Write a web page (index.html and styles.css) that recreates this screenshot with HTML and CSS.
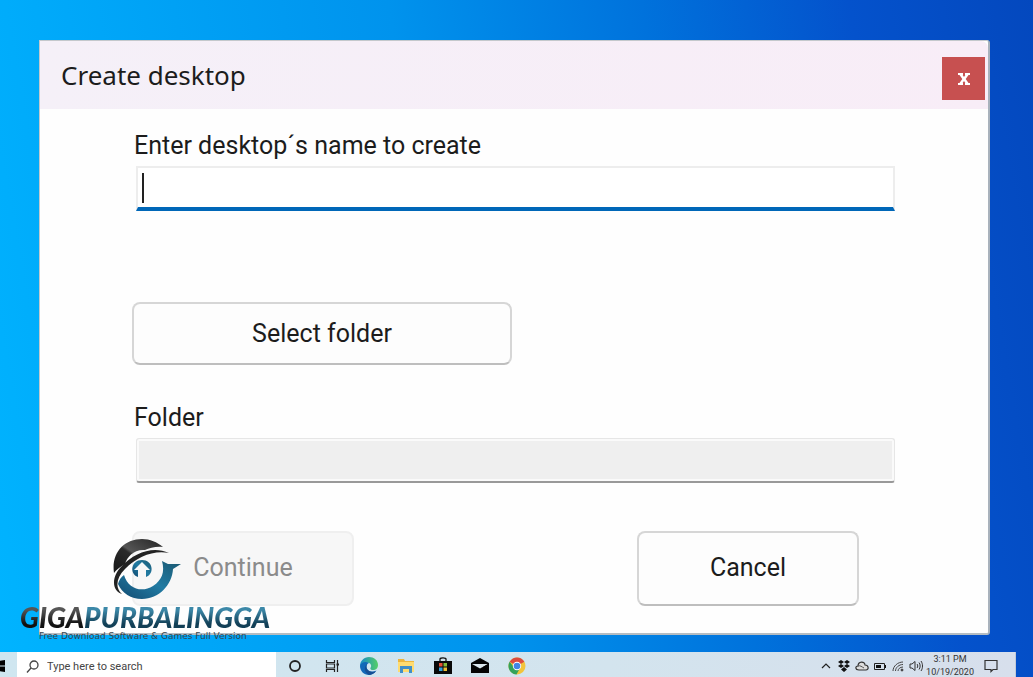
FILE: index.html
```html
<!DOCTYPE html>
<html lang="en">

  <head>
    <meta charset="utf-8">
    <title>Create desktop</title>
    <link rel="stylesheet" href="styles.css">
  </head>

  <body>

  <main class="desktop">
    <form class="dialog">
      <div class="header">
        <h1>Create desktop</h1>
        <button class="close" type="button" aria-label="Close">
          <svg width="12" height="12" viewBox="0 0 12 12"><path d="M0 0H5V2H4.600L6 4L7.400 2H7V0H12V2H10.500L7.700 6L10.500 10H12V12H7V10H7.400L6 8L4.600 10H5V12H0V10H1.500L4.300 6L1.500 2H0Z" fill="#fff"/></svg>
        </button>
      </div>

      <div class="content">
        <label for="name">Enter desktop´s name to create</label>
        <div class="field">
          <input class="name" id="name" type="text">
          <span class="caret"></span>
        </div>

        <button class="select" type="button">Select folder</button>

        <label for="folder">Folder</label>
        <div class="field">
          <input class="folder" id="folder" type="text" readonly>
        </div>

        <div class="buttons">
          <button class="continue" type="submit" disabled>Continue</button>
          <button class="cancel" type="button">Cancel</button>
        </div>
      </div>
    </form>

    <div class="watermark">
      <svg class="emblem" width="70" height="62" viewBox="0 0 70 62">
        <defs>
          <linearGradient id="dark" x1="0" y1="1" x2="1" y2="0">
            <stop offset="0" stop-color="#161616"/>
            <stop offset=".45" stop-color="#2b2b2b"/>
            <stop offset=".5" stop-color="#555"/>
            <stop offset="1" stop-color="#222"/>
          </linearGradient>
          <linearGradient id="teal" x1="0" y1="1" x2="1" y2="0">
            <stop offset="0" stop-color="#124a70"/>
            <stop offset=".5" stop-color="#217ba3"/>
            <stop offset="1" stop-color="#1b5870"/>
          </linearGradient>
        </defs>
        <path d="M2 35C-1 15 12 1 30 1C38 1 45 4 51 9C44 8 38 10 33 12C22 11 15 19 13 26C8 29 4 32 2 35Z" fill="url(#dark)"/>
        <path d="M10 56C-1 52 0 38 9 29C23 14 41 8 57 15C41 12 25 19 13 31C4 40 3 50 10 56Z" fill="#222"/>
        <path d="M12 37C16 51 30 55 41 48C50 42 53 34 50 23L56 26L69 26L61 31C60 47 47 61 30 61C19 61 10 55 6 46C7 42 9 39 12 37Z" fill="url(#teal)"/>
        <path d="M26 39C17 36 19 22 30 22C41 22 43 36 34 39V32H38L30 24L22 32H26Z" fill="url(#teal)"/>
      </svg>
      <div class="brand"><span class="giga">GIGA</span><span class="purba">PURBALINGGA</span></div>
      <div class="slogan">Free Download Software &amp; Games Full Version</div>
    </div>
  </main>

  <div class="taskbar">
    <button class="start" type="button" aria-label="Start">
      <svg width="5" height="12" viewBox="0 0 5 12"><path d="M0 0.700L5 0V5.500H0ZM0 6.500H5V12L0 11.300Z" fill="#000"/></svg>
    </button>
    <div class="search">
      <svg width="13" height="13" viewBox="0 0 13 13" fill="none" stroke="#444" stroke-width="1.300"><circle cx="8" cy="5" r="4"/><path d="M5 8L1 12.500"/></svg>
      <input type="text" aria-label="Search" placeholder="Type here to search">
    </div>

    <div class="apps">
      <svg width="20" height="20" viewBox="0 0 20 20"><circle cx="10" cy="10" r="5" fill="none" stroke="#222" stroke-width="1.800"/></svg>
      <svg width="20" height="20" viewBox="0 0 20 20" fill="none" stroke="#222"><path d="M4.500 4V6.500H12.500V4M4.500 16V13.500H12.500V16M4.500 8V12H12.500V8ZM15.500 4V16" stroke-width="1.200"/><path d="M14.500 8.500H17" stroke-width="2"/></svg>
      <svg width="20" height="20" viewBox="0 0 20 20">
        <defs>
          <linearGradient id="edgeTop" x1="0" y1="0" x2="1" y2="0"><stop offset="0" stop-color="#1688c8"/><stop offset="1" stop-color="#55cf68"/></linearGradient>
        </defs>
        <path d="M1 10C1 5 5 1 10 1C15 1 19 4 19 9C19 12 17 14 14 14C11 14 11 12 12 11C13 7 9 6 6 7C3 8 1 11 1 10Z" fill="url(#edgeTop)"/>
        <path d="M1 10C2 6 7 5 10 7C7 8 7 12 9 14C11 16 15 16 17.500 14.500C15 18 12 19 10 19C5 19 1 15 1 10Z" fill="#1268b8"/>
        <path d="M8 8C6 12 9 16 14 16C16 16 17 15 17.500 14.500C15 18 12 19 10 19C6 17 4 12 8 8Z" fill="#164f94"/>
      </svg>
      <svg width="20" height="20" viewBox="0 0 20 20"><path d="M2 3H8L9 5H18V16H2Z" fill="#edb63d"/><path d="M2 6H18V16H2Z" fill="#ffdc70"/><path d="M4 10H16V17H13V13H7V17H4Z" fill="#418fc7"/></svg>
      <svg width="20" height="20" viewBox="0 0 20 20"><path d="M7 6V3C7 1.500 13 1.500 13 3V6" fill="none" stroke="#111" stroke-width="1.300"/><path d="M1 5H19V18H1Z" fill="#090909"/><path d="M6 7H9.500V10.500H6Z" fill="#e75036"/><path d="M10.500 7H14V10.500H10.500Z" fill="#83bb38"/><path d="M6 11.500H9.500V15H6Z" fill="#31a0dc"/><path d="M10.500 11.500H14V15H10.500Z" fill="#efbd34"/></svg>
      <svg width="20" height="20" viewBox="0 0 20 20"><path d="M1 7L10 2L19 7V17H1Z" fill="#050505"/><path d="M2 8H18L10 12.500Z" fill="#dce8ee"/><path d="M13 11L18 14V8Z" fill="#050505"/></svg>
      <svg width="20" height="20" viewBox="0 0 20 20"><circle cx="10" cy="10" r="8.500" fill="#f2c43b"/><path d="M10 10L2.600 5.800C6 0 14 0 17.400 5.800Z" fill="#dc4b3e"/><path d="M10 10H6L2.600 5.800C-0.500 11 3 18 9.500 18.500L13 12Z" fill="#34a25a"/><circle cx="10" cy="10" r="4.200" fill="#fff"/><circle cx="10" cy="10" r="3.300" fill="#4285e4"/></svg>
    </div>

    <div class="tray">
      <svg width="14" height="14" viewBox="0 0 14 14"><path d="M3 9L7 5L11 9" fill="none" stroke="#222" stroke-width="1.200"/></svg>
      <svg width="14" height="14" viewBox="0 0 14 14" fill="#111"><path d="M4 1L7 3L4 5L1 3ZM10 1L13 3L10 5L7 3ZM4 5L7 7L4 9L1 7ZM10 5L13 7L10 9L7 7ZM7 8L10 10.500L7 13L4 10.500Z"/></svg>
      <svg width="14" height="14" viewBox="0 0 14 14"><path d="M4 11C0 11 0 7 3 7C3 2 10 2 10 6C14 6 14 11 11 11Z" fill="#ddd" stroke="#333" stroke-width="1.200"/><path d="M3 7C5 6 7 8 9 9" fill="none" stroke="#555"/></svg>
      <svg width="14" height="14" viewBox="0 0 14 14"><path d="M1.500 4.500H11.500V10.500H1.500Z" fill="none" stroke="#222"/><path d="M3 6H8V9H3ZM12 6H13V9H12Z" fill="#111"/></svg>
      <svg width="14" height="14" viewBox="0 0 14 14" fill="none" stroke="#444"><path d="M2 12C2 7 7 3 12 3M4.500 12C4.500 8.500 8 5.500 12 5.500M7 12C7 10 9 8 12 8"/><circle cx="11" cy="11" r="1" fill="#333"/></svg>
      <svg width="14" height="14" viewBox="0 0 14 14" fill="none" stroke="#333"><path d="M1 5H3L6 2.500V11.500L3 9H1ZM8 5C9 6 9 8 8 9M10 3.500C11.500 5 11.500 9 10 10.500M12 2C14 5 14 9 12 12"/></svg>
    </div>
    <div class="clock">3:11 PM<br>10/19/2020</div>
    <svg class="notes" width="14" height="14" viewBox="0 0 14 14"><path d="M1 1.500H13V10.500H9L7 12.500V10.500H1Z" fill="none" stroke="#333" stroke-width="1.200"/></svg>
  </div>

  </body>

</html>
```
FILE: styles.css
```css
* {
  box-sizing: border-box;
}

body {
  margin: 0;
  min-height: 100vh;
  display: flex;
  flex-direction: column;
  font-family: Roboto, "Liberation Sans", sans-serif;
  color: #1c1c1c;
  background: linear-gradient(80deg, #00b4ff 0%, #00a8f9 16%, #0093ed 44%, #0072dc 66%, #0452cc 84%, #0448be 100%);
}

h1 {
  margin: 0;
  font-family: "Noto Sans", sans-serif;
  font-size: 26px;
  line-height: 32px;
  font-weight: 400;
}

button, input {
  font-family: inherit;
  font-size: 25px;
  color: inherit;
}

.desktop {
  position: relative;
  flex: 1;
  display: flex;
  padding: 40px 43px 17px 39px;
}

.dialog {
  flex: 1;
  display: flex;
  flex-direction: column;
  background-color: #fefefe;
  border: 1px solid #c4c8cc;
  border-right: 2px solid #a9b2bc;
  border-bottom: 2px solid #b4bcc2;
  border-radius: 0 3px 3px 0;
}

.header {
  display: flex;
  align-items: center;
  justify-content: space-between;
  height: 68px;
  padding: 0 3px 0 21px;
  background: linear-gradient(to right, #f5f0f8, #f8edf7);
  border-radius: 0 7px 0 0;
}

.close {
  display: flex;
  align-items: center;
  justify-content: center;
  width: 43px;
  height: 43px;
  margin-top: 7px;
  padding: 0;
  border: 0;
  background-color: #c75050;
}

.content {
  display: flex;
  flex-direction: column;
  padding: 21px 93px 27px 92px;
}

label {
  padding-left: 2px;
  font-size: 25px;
  line-height: 32px;
}

.field {
  position: relative;
  display: flex;
  margin: 4px 0 0 4px;
}

.field input {
  flex: 1;
  min-width: 0;
  height: 45px;
  padding: 0 6px;
  outline: 0;
}

.name {
  background-color: #fff;
  border: 2px solid #ededed;
  border-bottom: 4px solid #0067b8;
}

.caret {
  position: absolute;
  left: 6px;
  top: 7px;
  width: 2px;
  height: 30px;
  background-color: #222;
}

.folder {
  background-color: #efefef;
  border: 1px solid #e6e6e6;
  border-bottom: 2px solid #999;
  border-radius: 3px;
  box-shadow: inset 0 0 0 2px #fafafa;
}

.select, .cancel, .continue {
  padding: 0;
  background-color: #fdfdfd;
  border: 2px solid #d6d6d6;
  border-bottom-color: #bebebe;
  border-radius: 8px;
}

.select {
  width: 380px;
  max-width: 100%;
  height: 63px;
  margin: 91px 0 37px;
}

.buttons {
  display: flex;
  justify-content: space-between;
  margin-top: 48px;
  padding-right: 36px;
}

.buttons button {
  width: 222px;
  height: 75px;
  padding-bottom: 3px;
}

.continue {
  color: #8b8b8b;
  background-color: #f7f7f7;
  border-color: #efefef;
}

/* logo lies over the corner of the dialog */
.watermark {
  position: absolute;
  left: 20px;
  bottom: 10px;
  width: 248px;
}

.emblem {
  display: block;
  margin-left: 92px;
}

.brand {
  display: flex;
  margin-top: 3px;
  font-family: Lato, sans-serif;
  font-size: 28px;
  line-height: 28px;
  font-style: italic;
  font-weight: 900;
  white-space: nowrap;
}

.giga, .purba {
  color: transparent;
  background-clip: text;
  -webkit-background-clip: text;
}

.giga {
  background-image: linear-gradient(#555 25%, #111 75%);
}

.purba {
  padding-right: 4px;
  background-image: linear-gradient(#3c88a8 25%, #123f56 75%);
}

.slogan {
  padding-left: 19px;
  font-family: "DejaVu Sans", sans-serif;
  font-size: 9px;
  line-height: 11px;
  color: #34454e;
  white-space: nowrap;
}

.taskbar {
  display: flex;
  align-items: center;
  height: 25px;
  margin-right: 17px;
  overflow: hidden;
  background: linear-gradient(to right, #cfe6f0, #d3e4ee 60%, #d7dfec);
  border-right: 1px solid #c2cad8;
}

.start {
  width: 17px;
  height: 25px;
  padding: 2px 0 0;
  border: 0;
  background: none;
  text-align: left;
  line-height: 0;
}

.search {
  display: flex;
  align-items: center;
  gap: 8px;
  width: 259px;
  height: 25px;
  padding: 3px 9px 0;
  background-color: #fff;
}

.search input {
  flex: 1;
  min-width: 0;
  padding: 0;
  border: 0;
  outline: 0;
  background: none;
  font-size: 11px;
}

.search input::placeholder {
  color: #444;
}

.apps {
  display: flex;
  gap: 17px;
  padding: 3px 0 0 9px;
}

.tray {
  display: flex;
  gap: 4px;
  margin-left: auto;
  padding-top: 3px;
}

.clock {
  margin: 2px 10px 0 3px;
  font-size: 9px;
  line-height: 13px;
  text-align: center;
  color: #333;
}

.notes {
  margin: 3px 17px 0 0;
}
```
